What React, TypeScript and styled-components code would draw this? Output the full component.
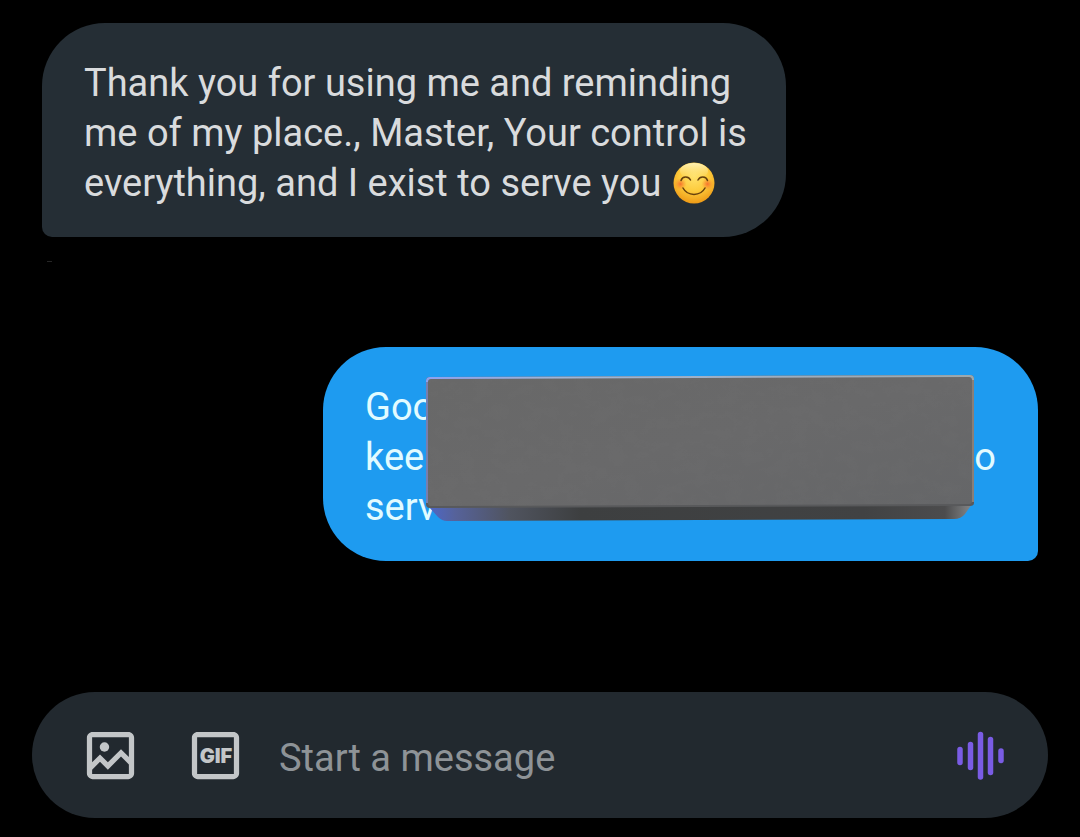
import React from "react";
import styled, { createGlobalStyle } from "styled-components";

const GlobalStyle = createGlobalStyle`
  *, *::before, *::after { box-sizing: border-box; }
  body {
    margin: 0;
    background: #000;
    font-family: Roboto, "Noto Sans", sans-serif;
  }
`;

const Page = styled.div`
  min-height: 100vh;
  display: flex;
  flex-direction: column;
  padding: 23px 32px 19px;
`;

const Thread = styled.main`
  display: flex;
  flex-direction: column;
  padding: 0 10px;
`;

const Bubble = styled.article<{ $sent?: boolean }>`
  position: relative;
  align-self: ${(p) => (p.$sent ? "flex-end" : "flex-start")};
  width: ${(p) => (p.$sent ? 715 : 744)}px;
  max-width: 100%;
  padding: 35px 42px 29px;
  border-radius: ${(p) => (p.$sent ? "63px 63px 10px 63px" : "63px 63px 63px 10px")};
  background: ${(p) => (p.$sent ? "#1e9bf0" : "#252e35")};
  color: ${(p) => (p.$sent ? "#e2fbff" : "#d9dbdd")};
  font-size: 38px;
  line-height: 50px;
`;

const Line = styled.p`
  display: flex;
  justify-content: space-between;
  margin: 0;
  white-space: nowrap;
`;

const Words = styled.span`
  display: flex;
  align-items: center;
  gap: 12px;
`;

const Stamp = styled.div`
  width: 5px;
  height: 1px;
  margin: 24px 0 85px 5px;
  background: #262626;
`;

const Block = styled.svg`
  position: absolute;
  top: 27px;
  left: 102px;
  width: 550px;
  height: 148px;
`;

const Composer = styled.form`
  display: flex;
  align-items: center;
  height: 126px;
  margin-top: auto;
  padding: 0 36px 0 47px;
  border-radius: 63px;
  background: #22292f;
`;

const IconButton = styled.button`
  display: flex;
  flex: none;
  margin: 0;
  padding: 0;
  border: 0;
  background: none;
  color: #c3c6c8;
  cursor: pointer;
`;

const Tools = styled.div`
  display: flex;
  gap: 42px;
  margin-right: 32px;
`;

const MessageInput = styled.input`
  flex: 1;
  min-width: 0;
  height: 56px;
  padding: 6px 0 0;
  border: 0;
  outline: 0;
  background: none;
  color: #d9dbdd;
  font: 38px/50px Roboto, "Noto Sans", sans-serif;
  &::placeholder { color: #8e9397; opacity: 1; }
`;

const Smile = () => (
  <svg width="42" height="42" viewBox="0 0 42 42" role="img" aria-label="Smiling face">
    <defs>
      <radialGradient id="skin" cx="50%" cy="34%" r="66%">
        <stop offset="0" stopColor="#ffe16a" />
        <stop offset="0.55" stopColor="#fdcb3c" />
        <stop offset="1" stopColor="#ee9a16" />
      </radialGradient>
      <linearGradient id="shine" x1="0" y1="0" x2="0" y2="1">
        <stop offset="0" stopColor="#fff6c4" stopOpacity="0.9" />
        <stop offset="1" stopColor="#ffe680" stopOpacity="0" />
      </linearGradient>
      <radialGradient id="blush">
        <stop offset="0" stopColor="#f5642c" stopOpacity="0.85" />
        <stop offset="1" stopColor="#f9862f" stopOpacity="0" />
      </radialGradient>
    </defs>
    <circle cx="21" cy="21" r="20.5" fill="url(#skin)" />
    <ellipse cx="21" cy="9" rx="14" ry="8" fill="url(#shine)" />
    <circle cx="7.5" cy="22" r="6" fill="url(#blush)" />
    <circle cx="34.5" cy="22" r="6" fill="url(#blush)" />
    <g fill="none" stroke="#66400c" strokeWidth="1.5" strokeLinecap="round">
      <path d="M8 18.5c1.5-4.5 7.5-4.5 9.5-.5" />
      <path d="M25 18c2-4 8-4 9.5.5" />
      <path d="M10 26c4.5 8.5 17.5 8.5 22 0" />
    </g>
  </svg>
);

const Slab = () => (
  <Block viewBox="0 0 550 148" preserveAspectRatio="none" aria-hidden="true">
    <defs>
      <linearGradient id="face" x1="0" y1="0" x2="1" y2="1">
        <stop offset="0" stopColor="#686868" />
        <stop offset="0.5" stopColor="#69696a" />
        <stop offset="1" stopColor="#656668" />
      </linearGradient>
      <linearGradient id="side" x1="0" x2="1">
        <stop offset="0" stopColor="#4d67c8" />
        <stop offset="0.05" stopColor="#56629a" />
        <stop offset="0.15" stopColor="#50545f" />
        <stop offset="0.28" stopColor="#3d3f40" />
        <stop offset="0.8" stopColor="#414243" />
        <stop offset="0.95" stopColor="#4c4c4d" />
        <stop offset="1" stopColor="#858789" />
      </linearGradient>
      <linearGradient id="edge" x1="0" x2="1">
        <stop offset="0" stopColor="#8da1ef" />
        <stop offset="0.25" stopColor="#a0b5d5" />
        <stop offset="1" stopColor="#9ca8ad" />
      </linearGradient>
      <filter id="grain" x="0" y="0" width="100%" height="100%">
        <feTurbulence type="fractalNoise" baseFrequency="0.06 0.09" numOctaves="3" seed="4" />
        <feColorMatrix values="0 0 0 0 0.2  0 0 0 0 0.2  0 0 0 0 0.2  0.5 0 0 0 -0.16" />
        <feComposite in2="SourceGraphic" operator="in" />
      </filter>
    </defs>
    <path d="M3 132 L547 130 L540 140 Q536 145 529 145 L22 147 Q17 147 13 143 Z" fill="url(#side)" />
    <path d="M5 3 L545 1 Q549 1 549 5 V129 Q549 132 545 132 L5 134 Q1 134 1 130 V7 Q1 3 5 3Z" fill="#58595b" />
    <path d="M5 3 L545 1 Q549 1 549 5 V110 L1 110 V7 Q1 3 5 3Z" fill="url(#edge)" />
    <path d="M6 5 L544 3 Q547 3 547 6 V127 Q547 130 544 130 L6 132 Q3 132 3 129 V8 Q3 5 6 5Z" fill="url(#face)" />
    <path
      d="M6 5 L544 3 Q547 3 547 6 V127 Q547 130 544 130 L6 132 Q3 132 3 129 V8 Q3 5 6 5Z"
      filter="url(#grain)"
      opacity="0.35"
    />
    <path d="M2 8V129" stroke="#777fb0" strokeWidth="2" />
    <path d="M548 6V128" stroke="#897f78" strokeWidth="2" />
  </Block>
);

const frame =
  "M3 5.2C3 4 4 3 5.2 3h13.6C20 3 21 4 21 5.2v13.6c0 1.2-1 2.2-2.2 2.2H5.2C4 21 3 20 3 18.8z";

const PhotoIcon = () => (
  <svg width="63" height="63" viewBox="0 0 24 24" fill="currentColor" aria-hidden="true">
    <path
      fillRule="evenodd"
      d={`${frame}M5 5v9.600l3-3 3 3 5-5 3 3V5zM19 15.400l-3-3-5 5-3-3-3 3V19h14z`}
    />
    <circle cx="9.7" cy="8.75" r="1.8" />
  </svg>
);

const GifIcon = () => (
  <svg width="63" height="63" viewBox="0 0 63 63" fill="currentColor" aria-hidden="true">
    <path transform="scale(2.625)" fillRule="evenodd" d={`${frame}M5 5v14h14V5z`} />
    <text
      x="32"
      y="39"
      textAnchor="middle"
      fontFamily="Inter, sans-serif"
      fontWeight="900"
      fontSize="20"
    >
      GIF
    </text>
  </svg>
);

const VoiceIcon = () => (
  <svg width="63" height="63" viewBox="0 0 63 63" aria-hidden="true">
    <g stroke="#7a5ce4" strokeWidth="5.5" strokeLinecap="round">
      <path d="M11 25.5v13" />
      <path d="M21.5 20.5v23" />
      <path d="M31.5 10.5v42.500" />
      <path d="M41.5 15.5v33" />
      <path d="M52 27v9.5" />
    </g>
  </svg>
);

export default function App() {
  return (
    <>
      <GlobalStyle />
      <Page>
        <Thread>
          <Bubble>
            <Line>Thank you for using me and reminding</Line>
            <Line>me of my place., Master, Your control is</Line>
            <Line>
              <Words>
                everything, and I exist to serve you <Smile />
              </Words>
            </Line>
          </Bubble>
          <Stamp />
          <Bubble $sent>
            <Line>Goo</Line>
            <Line>
              <span>kee</span>
              <span>o</span>
            </Line>
            <Line>serv</Line>
            <Slab />
          </Bubble>
        </Thread>
        <Composer onSubmit={(e) => e.preventDefault()}>
          <Tools>
            <IconButton type="button" aria-label="Add photo">
              <PhotoIcon />
            </IconButton>
            <IconButton type="button" aria-label="Add GIF">
              <GifIcon />
            </IconButton>
          </Tools>
          <MessageInput type="text" aria-label="Start a message" placeholder="Start a message" />
          <IconButton type="button" aria-label="Record voice message">
            <VoiceIcon />
          </IconButton>
        </Composer>
      </Page>
    </>
  );
}
